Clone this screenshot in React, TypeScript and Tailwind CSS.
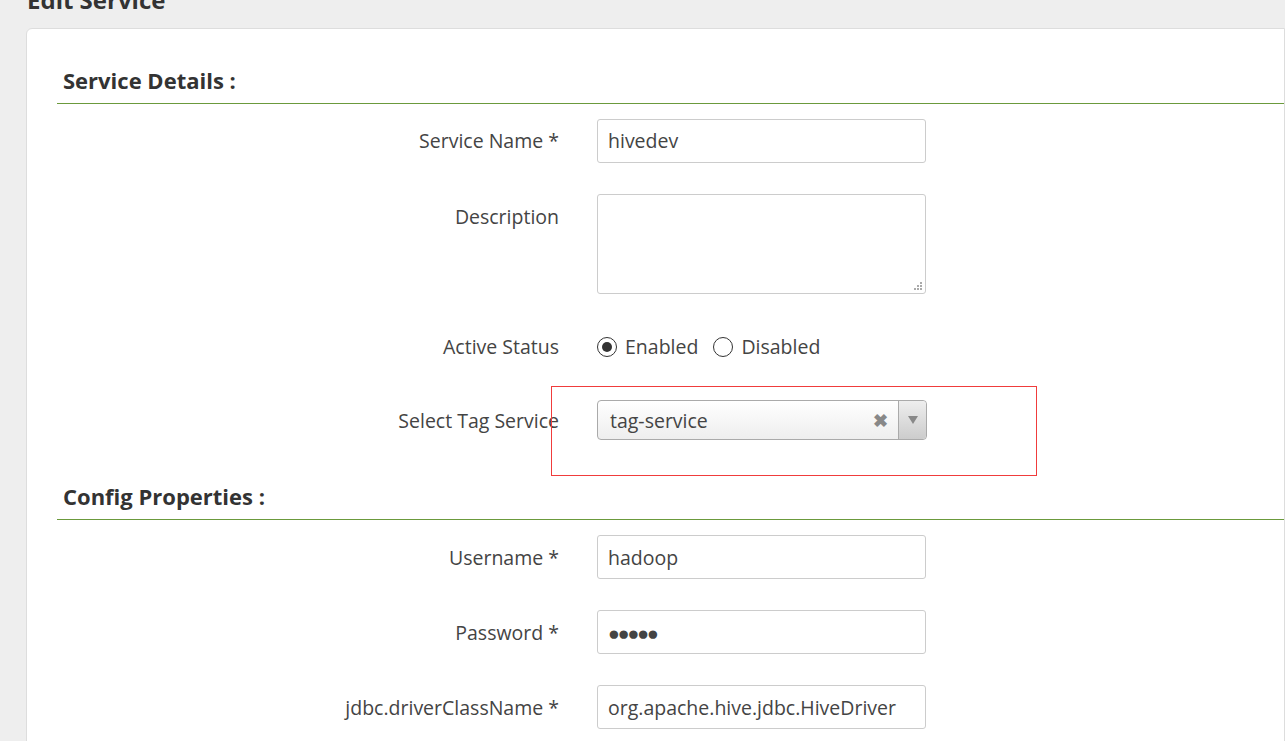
export default function App() {
  const input = "w-[329px] h-[44px] border border-[#ccc] rounded-[3px] px-[10px] text-[19.5px] text-[#444] flex items-center bg-white";
  const label = "w-[540px] text-right text-[19.5px] text-[#444] pr-[38px]";
  return (
    <div className="w-[1285px] h-[741px] bg-[#eeeeee] overflow-hidden relative" style={{ fontFamily: '"Open Sans", sans-serif' }}>
      <div className="absolute left-[27px] top-[-18px] text-[24px] font-bold text-[#333]">Edit Service</div>
      <div className="ml-[26px] mt-[28px] h-[760px] bg-white border border-[#ddd] rounded-tl-[6px] pl-[30px] pt-[33px]">
        <div className="pl-[6px] text-[22px] font-bold text-[#333] leading-[36px]">Service Details :</div>
        <div className="h-px bg-[#6b9a3c] mt-[5px]"></div>
        <div className="flex items-center mt-[15px]">
          <div className={label}>Service Name *</div>
          <div className={input}>hivedev</div>
        </div>
        <div className="flex items-start mt-[31px]">
          <div className={label + " mt-[8px]"}>Description</div>
          <div className="relative w-[329px] h-[100px] border border-[#ccc] rounded-[3px]">
            <div className="absolute right-[3px] bottom-[3px] grid grid-cols-3 gap-[1px]">
              {[0,0,1,0,1,1,1,1,1].map((v,i)=>(<div key={i} className={"w-[2px] h-[2px] " + (v ? "bg-[#aaa]" : "")}></div>))}
            </div>
          </div>
        </div>
        <div className="flex items-center mt-[38px]">
          <div className={label}>Active Status</div>
          <div className="flex items-center text-[19.5px] text-[#444]">
            <span className="w-[20px] h-[20px] rounded-full border border-[#333] flex items-center justify-center mr-[8px]"><span className="w-[10px] h-[10px] rounded-full bg-[#333]"></span></span>
            Enabled
            <span className="w-[20px] h-[20px] rounded-full border border-[#333] ml-[15px] mr-[8px]"></span>
            Disabled
          </div>
        </div>
        <div className="flex items-start mt-[25px]">
          <div className={label + " mt-[20px]"}>Select Tag Service</div>
          <div className="relative h-[90px]">
            <div className="absolute left-[-46px] top-[0px] w-[486px] h-[90px] border border-[#f03c3c]"></div>
            <div className="mt-[14px] w-[330px] h-[40px] border border-[#aaa] rounded-[4px] flex items-center bg-gradient-to-b from-white to-[#eee] relative">
              <span className="pl-[12px] text-[19.5px] text-[#444] flex-1">tag-service</span>
              <span className="text-[#888] text-[18px] font-bold mr-[10px]">✖</span>
              <span className="w-[28px] h-full border-l border-[#aaa] flex items-center justify-center bg-gradient-to-b from-[#eee] to-[#ccc] rounded-r-[4px]">
                <svg width="10" height="8"><path d="M0 0h10L5 8z" fill="#888"/></svg>
              </span>
            </div>
          </div>
        </div>
        <div className="pl-[6px] text-[22px] font-bold text-[#333] leading-[36px] mt-[2px]">Config Properties :</div>
        <div className="h-px bg-[#6b9a3c] mt-[5px]"></div>
        <div className="flex items-center mt-[15px]">
          <div className={label}>Username *</div>
          <div className={input}>hadoop</div>
        </div>
        <div className="flex items-center mt-[31px]">
          <div className={label}>Password *</div>
          <div className={input + " tracking-[-2px]"}>●●●●●</div>
        </div>
        <div className="flex items-center mt-[31px]">
          <div className={label}>jdbc.driverClassName *</div>
          <div className={input}>org.apache.hive.jdbc.HiveDriver</div>
        </div>
      </div>
    </div>
  );
}
